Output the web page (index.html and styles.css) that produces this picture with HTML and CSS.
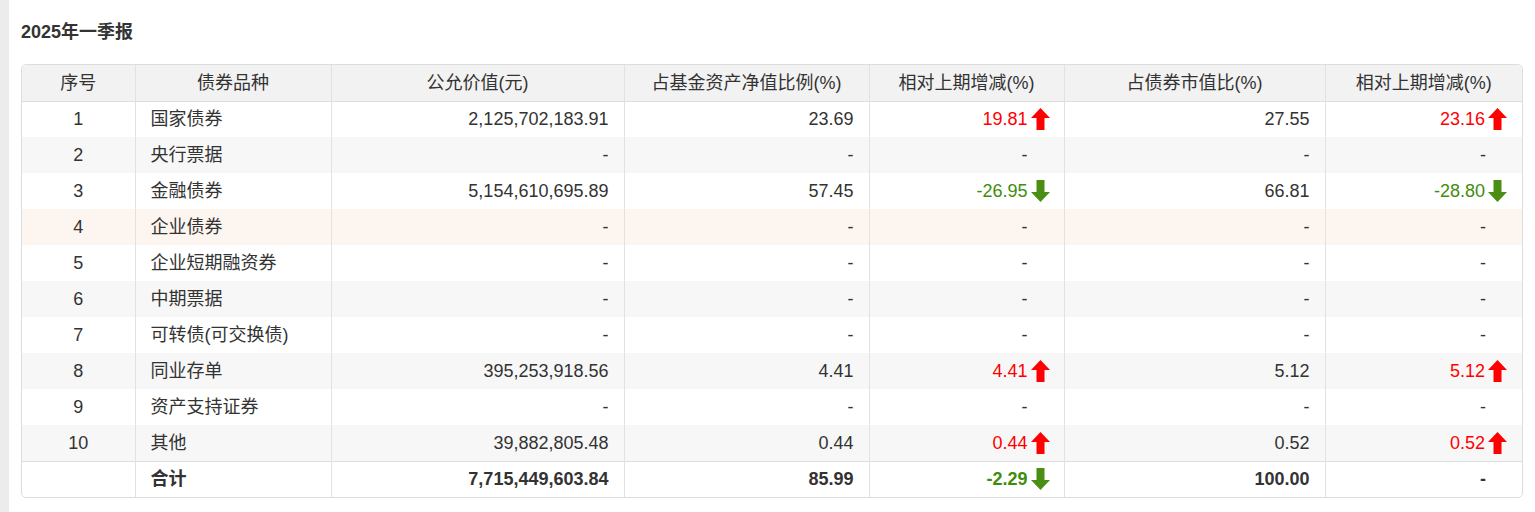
FILE: index.html
```html
<!DOCTYPE html>
<html lang="zh">
<head>
<meta charset="utf-8">
<link rel="stylesheet" href="styles.css">
</head>
<body>
<div class="page">
  <div class="strip"></div>
  <div class="content">
    <h2 class="title">2025年一季报</h2>
    <div class="table-wrap">
      <table class="bond-table">
        <colgroup>
          <col style="width:113px"><col style="width:196px"><col style="width:293px"><col style="width:245px"><col style="width:195px"><col style="width:261px"><col style="width:197px">
        </colgroup>
        <thead>
          <tr>
            <th>序号</th><th>债券品种</th><th>公允价值(元)</th><th>占基金资产净值比例(%)</th><th>相对上期增减(%)</th><th>占债券市值比(%)</th><th>相对上期增减(%)</th>
          </tr>
        </thead>
        <tbody>
          <tr>
            <td class="c">1</td><td class="l">国家债券</td><td class="r">2,125,702,183.91</td><td class="r">23.69</td>
            <td class="r"><span class="chg up">19.81<svg class="arr" viewBox="0 0 19 22"><polygon points="9.5,0 19,10 13.5,10 13.5,22 5.5,22 5.5,10 0,10"/></svg></span></td>
            <td class="r">27.55</td>
            <td class="r last"><span class="chg up">23.16<svg class="arr" viewBox="0 0 19 22"><polygon points="9.5,0 19,10 13.5,10 13.5,22 5.5,22 5.5,10 0,10"/></svg></span></td>
          </tr>
          <tr class="alt">
            <td class="c">2</td><td class="l">央行票据</td><td class="r">-</td><td class="r">-</td><td class="r dash">-</td><td class="r">-</td><td class="r dash">-</td>
          </tr>
          <tr>
            <td class="c">3</td><td class="l">金融债券</td><td class="r">5,154,610,695.89</td><td class="r">57.45</td>
            <td class="r"><span class="chg down">-26.95<svg class="arr" viewBox="0 0 19 22"><polygon points="5.5,0 13.5,0 13.5,12 19,12 9.5,22 0,12 5.5,12"/></svg></span></td>
            <td class="r">66.81</td>
            <td class="r last"><span class="chg down">-28.80<svg class="arr" viewBox="0 0 19 22"><polygon points="5.5,0 13.5,0 13.5,12 19,12 9.5,22 0,12 5.5,12"/></svg></span></td>
          </tr>
          <tr class="hl">
            <td class="c">4</td><td class="l">企业债券</td><td class="r">-</td><td class="r">-</td><td class="r dash">-</td><td class="r">-</td><td class="r dash">-</td>
          </tr>
          <tr>
            <td class="c">5</td><td class="l">企业短期融资券</td><td class="r">-</td><td class="r">-</td><td class="r dash">-</td><td class="r">-</td><td class="r dash">-</td>
          </tr>
          <tr class="alt">
            <td class="c">6</td><td class="l">中期票据</td><td class="r">-</td><td class="r">-</td><td class="r dash">-</td><td class="r">-</td><td class="r dash">-</td>
          </tr>
          <tr>
            <td class="c">7</td><td class="l">可转债(可交换债)</td><td class="r">-</td><td class="r">-</td><td class="r dash">-</td><td class="r">-</td><td class="r dash">-</td>
          </tr>
          <tr class="alt">
            <td class="c">8</td><td class="l">同业存单</td><td class="r">395,253,918.56</td><td class="r">4.41</td>
            <td class="r"><span class="chg up">4.41<svg class="arr" viewBox="0 0 19 22"><polygon points="9.5,0 19,10 13.5,10 13.5,22 5.5,22 5.5,10 0,10"/></svg></span></td>
            <td class="r">5.12</td>
            <td class="r last"><span class="chg up">5.12<svg class="arr" viewBox="0 0 19 22"><polygon points="9.5,0 19,10 13.5,10 13.5,22 5.5,22 5.5,10 0,10"/></svg></span></td>
          </tr>
          <tr>
            <td class="c">9</td><td class="l">资产支持证券</td><td class="r">-</td><td class="r">-</td><td class="r dash">-</td><td class="r">-</td><td class="r dash">-</td>
          </tr>
          <tr class="alt">
            <td class="c">10</td><td class="l">其他</td><td class="r">39,882,805.48</td><td class="r">0.44</td>
            <td class="r"><span class="chg up">0.44<svg class="arr" viewBox="0 0 19 22"><polygon points="9.5,0 19,10 13.5,10 13.5,22 5.5,22 5.5,10 0,10"/></svg></span></td>
            <td class="r">0.52</td>
            <td class="r last"><span class="chg up">0.52<svg class="arr" viewBox="0 0 19 22"><polygon points="9.5,0 19,10 13.5,10 13.5,22 5.5,22 5.5,10 0,10"/></svg></span></td>
          </tr>
          <tr class="total">
            <td class="c"></td><td class="l">合计</td><td class="r">7,715,449,603.84</td><td class="r">85.99</td>
            <td class="r"><span class="chg down">-2.29<svg class="arr" viewBox="0 0 19 22"><polygon points="5.5,0 13.5,0 13.5,12 19,12 9.5,22 0,12 5.5,12"/></svg></span></td>
            <td class="r">100.00</td>
            <td class="r dash">-</td>
          </tr>
        </tbody>
      </table>
    </div>
  </div>
</div>
</body>
</html>
```

FILE: styles.css
```css
html, body {
  margin: 0;
  padding: 0;
  background: #ffffff;
}
body {
  font-family: "Liberation Sans", Arial, "Noto Sans CJK SC", sans-serif;
  color: #333333;
  font-size: 18px;
}
.page {
  display: flex;
  height: 512px;
  overflow: hidden;
}
.strip {
  width: 9px;
  flex: none;
  background: #ececec;
}
.content {
  flex: 1;
  padding: 0 12px 0 12px;
}
.title {
  margin: 0;
  padding-top: 20px;
  height: 64px;
  box-sizing: border-box;
  font-size: 18px;
  line-height: 24px;
  font-weight: bold;
  color: #333333;
}
.table-wrap {
  width: 1502px;
  border: 1px solid #dddddd;
  border-radius: 5px;
  overflow: hidden;
  box-sizing: border-box;
}
.bond-table {
  width: 100%;
  border-collapse: collapse;
  table-layout: fixed;
}
.bond-table th,
.bond-table td {
  border-left: 1px solid #e2e2e2;
  padding: 0 15px;
  height: 36px;
  line-height: 22px;
  white-space: nowrap;
  box-sizing: border-box;
}
.bond-table th:first-child,
.bond-table td:first-child {
  border-left: none;
}
.bond-table th {
  background: #f2f2f2;
  font-weight: normal;
  text-align: center;
  border-bottom: 1px solid #dedede;
  height: 36px;
}
.bond-table td.c { text-align: center; }
.bond-table td.l { text-align: left; }
.bond-table td.r { text-align: right; }
.bond-table td.dash { padding-right: 36px; }
.bond-table td.last { padding-right: 16px; }
.bond-table tr.alt td { background: #f7f7f7; }
.bond-table tr.hl td { background: #fdf5f0; }
.bond-table tr.total td {
  border-top: 1px solid #dedede;
  font-weight: bold;
  height: 36px;
}
.chg {
  display: inline-flex;
  align-items: center;
  gap: 3px;
  margin-right: -1px;
}
.chg.up { color: #ff0000; }
.chg.down { color: #3f8d0c; }
.arr {
  width: 19px;
  height: 22px;
  flex: none;
}
.up .arr polygon { fill: #ff0000; }
.down .arr polygon { fill: #4a8f14; }
```
